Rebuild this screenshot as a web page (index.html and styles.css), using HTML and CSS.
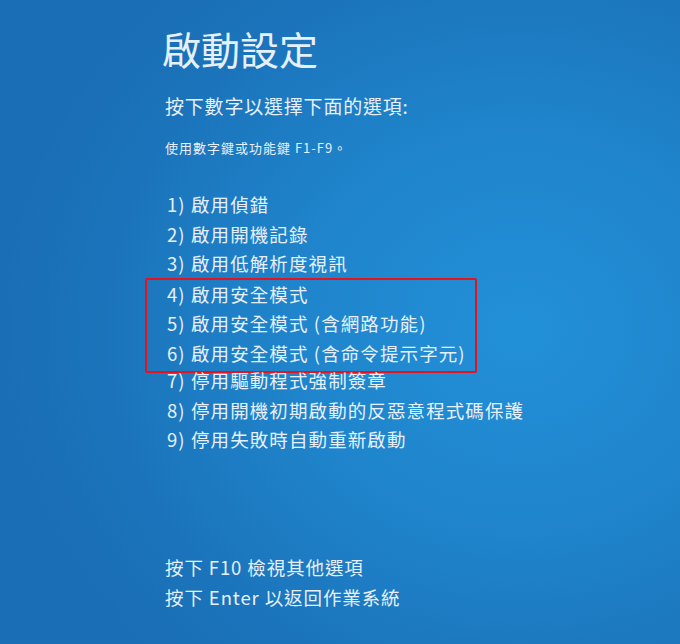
FILE: index.html
```html
<!DOCTYPE html>
<html lang="zh-Hant">
<head>
<meta charset="utf-8">
<link rel="stylesheet" href="styles.css">
</head>
<body>
<div class="screen">
  <div class="content">
    <h1 class="title">啟動設定</h1>
    <p class="subtitle">按下數字以選擇下面的選項:</p>
    <p class="hint">使用數字鍵或功能鍵 F1-F9。</p>
    <ul class="options">
      <li>1) 啟用偵錯</li>
      <li>2) 啟用開機記錄</li>
      <li>3) 啟用低解析度視訊</li>
      <li class="boxed">
        <ul class="group">
          <li>4) 啟用安全模式</li>
          <li>5) 啟用安全模式 (含網路功能)</li>
          <li>6) 啟用安全模式 (含命令提示字元)</li>
        </ul>
      </li>
      <li>7) 停用驅動程式強制簽章</li>
      <li>8) 停用開機初期啟動的反惡意程式碼保護</li>
      <li>9) 停用失敗時自動重新啟動</li>
    </ul>
    <div class="footer">
      <p>按下 F10 檢視其他選項</p>
      <p>按下 Enter 以返回作業系統</p>
    </div>
  </div>
</div>
</body>
</html>
```

FILE: styles.css
```css
html, body {
  margin: 0;
  padding: 0;
}
body {
  width: 680px;
  height: 644px;
  overflow: hidden;
}
.screen {
  width: 680px;
  height: 644px;
  background:
    radial-gradient(ellipse 520px 460px at 520px 330px, #2290d8 0%, #1f84cb 45%, #1b74bb 80%, #1a6eb5 100%);
  color: #e6f0fa;
  font-family: "Noto Sans CJK TC", "Noto Sans", sans-serif;
}
.content {
  padding: 20px 0 0 165px;
}
.title {
  margin: 0 0 0 -3px;
  font-size: 39px;
  font-weight: 400;
  line-height: 56px;
}
.subtitle {
  margin: 17px 0 0 0;
  font-size: 19px;
  line-height: 26px;
  letter-spacing: 0.8px;
}
.hint {
  margin: 20px 0 0 0;
  font-size: 13px;
  line-height: 18px;
  letter-spacing: 1px;
}
.options {
  list-style: none;
  margin: 33.4px 0 0 2px;
  padding: 0;
  font-size: 18.5px;
  line-height: 29.25px;
  letter-spacing: 1.1px;
}
.options li {
  white-space: nowrap;
}
.boxed {
  margin: 0 0 -6.45px -22px;
  width: 332px;
  border: 2px solid #e8121c;
  border-radius: 2px;
  padding: 0 0 3px 20px;
  box-sizing: border-box;
}
.group {
  list-style: none;
  margin: 0;
  padding: 0;
}
.footer {
  margin: 97.85px 0 0 0;
  font-size: 18.5px;
  line-height: 30px;
  letter-spacing: 0.9px;
}
.footer p {
  margin: 0;
}
```
